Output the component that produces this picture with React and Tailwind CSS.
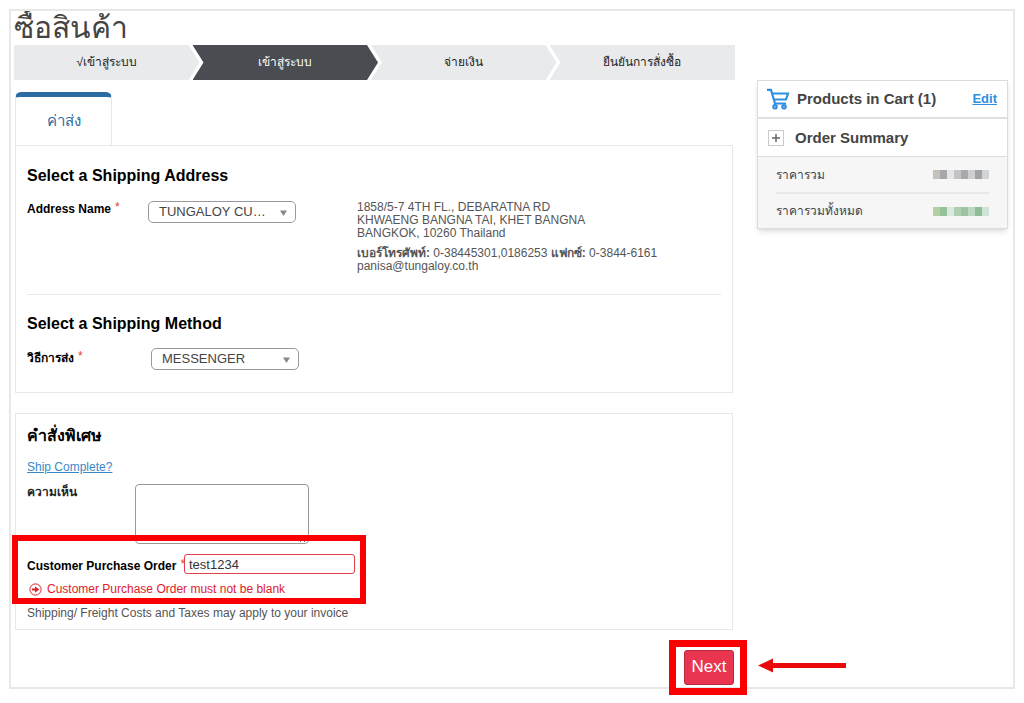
const steps = [
  { label: "√เข้าสู่ระบบ", shape: "bg-[#e9eaec] [clip-path:polygon(0_0,calc(100%-11px)_0,100%_50%,calc(100%-11px)_100%,0_100%)]" },
  { label: "เข้าสู่ระบบ", shape: "-ml-[7px] bg-[#4a4c51] text-white [clip-path:polygon(0_0,calc(100%-11px)_0,100%_50%,calc(100%-11px)_100%,0_100%,11px_50%)]" },
  { label: "จ่ายเงิน", shape: "-ml-[7px] bg-[#e9eaec] [clip-path:polygon(0_0,calc(100%-11px)_0,100%_50%,calc(100%-11px)_100%,0_100%,11px_50%)]" },
  { label: "ยืนยันการสั่งซื้อ", shape: "-ml-[7px] bg-[#e9eaec] [clip-path:polygon(0_0,100%_0,100%_100%,0_100%,11px_50%)]" },
];

const greyCells = ["#c4c2b8", "#a8a6ab", "#e4e5e6", "#c3c2c4", "#a9a8ac", "#cfcfd1", "#a3a2a6", "#d2d5d8"];
const greenCells = ["#b5cfa4", "#94c29b", "#dde9df", "#aecfb2", "#9cc4a0", "#bdd7c0", "#8fbd97", "#cfe3d6"];

// Hidden price, shown as a mosaic
function Mosaic({ cells }) {
  return (
    <svg width="56" height="9" viewBox="0 0 56 9" aria-hidden="true">
      {cells.map((c, i) => (
        <rect key={i} x={i * 7} width="7" height="9" fill={c} />
      ))}
    </svg>
  );
}

function Required() {
  return <span className="ml-1 self-start text-xs leading-3 font-normal text-[#e53935]">*</span>;
}

function Select({ id, children }) {
  return (
    <div className="relative w-[148px]">
      <select
        id={id}
        className="h-[22px] w-full appearance-none rounded-[5px] border border-[#999] bg-white pl-2.5 text-[13px] leading-5 text-[#444]"
      >
        <option>{children}</option>
      </select>
      <svg className="pointer-events-none absolute top-2 right-2" width="9" height="7" viewBox="0 0 9 7">
        <path d="M1 1.500h7L4.500 7z" fill="#888" />
      </svg>
    </div>
  );
}

export default function App() {
  return (
    <div className="bg-white p-[9px] font-['Liberation_Sans',sans-serif] text-xs text-[#444]">
      <div className="flex items-start border-2 border-[#e8e8e8] pr-[5px] pl-[3px]">
        <main className="min-w-0 flex-1">
          <h1 className="h-[34px] overflow-hidden text-[30px] leading-[34px] text-[#444]">ซื้อสินค้า</h1>

          <ol className="flex">
            {steps.map((s, i) => (
              <li key={i} className={`h-[35px] flex-1 text-center leading-[34px] text-[#222] ${s.shape}`}>
                {s.label}
              </li>
            ))}
          </ol>

          <div className="mt-3 flex pl-px">
            <button className="h-[53px] w-[97px] rounded-t-md border-x border-t-[5px] border-x-[#e8e8e8] border-t-[#2b6ca3] text-[15px] text-[#2b6ca3]">
              ค่าส่ง
            </button>
          </div>

          <section className="mr-0.5 ml-px h-[248px] border border-[#e8e8e8] px-[11px] pt-5">
            <h2 className="text-base leading-5 font-bold text-black">Select a Shipping Address</h2>
            <div className="mt-[15px] flex h-[94px] items-start border-b border-[#e8e8e8]">
              <label htmlFor="address" className="flex w-[121px] leading-4 font-bold text-black">
                Address Name <Required />
              </label>
              <Select id="address">TUNGALOY CU…</Select>
              <address className="ml-[61px] text-xs leading-[13px] whitespace-nowrap text-[#555] not-italic">
                1858/5-7 4TH FL., DEBARATNA RD
                <br />
                KHWAENG BANGNA TAI, KHET BANGNA
                <br />
                BANGKOK, 10260 Thailand
                <p className="mt-[7px]">
                  <b>เบอร์โทรศัพท์:</b> 0-38445301,0186253 <b>แฟกซ์:</b> 0-3844-6161
                  <br />
                  panisa@tungaloy.co.th
                </p>
              </address>
            </div>
            <h2 className="mt-[19px] text-base leading-5 font-bold text-black">Select a Shipping Method</h2>
            <div className="mt-3.5 flex items-start">
              <label htmlFor="method" className="flex w-[124px] pt-0.5 leading-4 font-bold text-black">
                วิธีการส่ง <Required />
              </label>
              <Select id="method">MESSENGER</Select>
            </div>
          </section>

          <section className="mt-5 mr-0.5 ml-px h-[217px] border border-[#e8e8e8] px-[11px] pt-3">
            <h2 className="text-base leading-5 font-bold text-black">คำสั่งพิเศษ</h2>
            <a href="#" className="mt-[13px] block leading-4 text-[#3a87c8] underline">Ship Complete?</a>
            <div className="mt-[9px] flex items-start">
              <label htmlFor="comment" className="w-[108px] leading-4 font-bold text-[#222]">ความเห็น</label>
              <textarea id="comment" className="h-[60px] w-[174px] rounded-sm border border-[#999]" />
            </div>
            <div className="relative mt-2.5">
              <div className="flex items-start">
                <label htmlFor="po" className="flex w-[157px] pt-1 leading-4 font-bold whitespace-nowrap text-black">
                  Customer Purchase Order <Required />
                </label>
                <input
                  id="po"
                  defaultValue="test1234"
                  className="h-5 w-[171px] rounded-[3px] border border-[#e0404a] px-1 text-[13px] text-[#333]"
                />
              </div>
              <p className="mt-[7px] flex items-center gap-[5px] pl-0.5 leading-4 text-[#e0202b]">
                <svg width="13" height="13" viewBox="0 0 13 13" fill="none" stroke="currentColor">
                  <circle cx="6.5" cy="6.5" r="5.6" />
                  <path d="M3 6.5h4" strokeWidth="2" />
                  <path d="M6 3.300l4.200 3.200-4.200 3.200z" fill="currentColor" stroke="none" />
                </svg>
                Customer Purchase Order must not be blank
              </p>
              <div className="pointer-events-none absolute -top-[19px] -left-[15px] h-[69px] w-[354px] border-[6px] border-[#fb0000]" />
            </div>
            <p className="mt-2 leading-4 text-[#555]">Shipping/ Freight Costs and Taxes may apply to your invoice</p>
          </section>

          <div className="mt-5 mr-px mb-0.5 flex justify-end">
            <div className="relative">
              <button className="h-[35px] w-[50px] rounded-[3px] border border-[#b52a3e] bg-[#e9354f] text-[17px] text-white">
                Next
              </button>
              <div className="pointer-events-none absolute -top-2.5 -right-[13px] -bottom-2.5 -left-[15px] border-[7px] border-[#fb0000]" />
              <svg className="absolute top-2 left-[74px]" width="88" height="15" viewBox="0 0 88 15" fill="#ea0808">
                <path d="M0 7.5L15 0.5V5H88V10H15V14.5z" />
              </svg>
            </div>
          </div>
        </main>

        <aside className="mt-[69px] ml-[22px] w-[251px] border border-[#dcdcdc] bg-white shadow-md">
          <div className="flex h-[38px] items-center border-b-2 border-[#e0e0e0] pr-2.5 pl-2">
            <svg width="24" height="22" viewBox="0 0 24 22" fill="none" stroke="#2f8fe0" strokeWidth="2.200">
              <path d="M1 1.800H5L9 15.500H20" />
              <path d="M6 5.500H22L20 11.500H8" />
              <circle cx="9" cy="18.800" r="1.700" />
              <circle cx="18" cy="18.800" r="1.700" />
            </svg>
            <h3 className="ml-[7px] text-[15px] font-bold whitespace-nowrap text-[#444]">Products in Cart (1)</h3>
            <a href="#" className="ml-auto text-[13px] font-bold text-[#2f8fe0] underline">Edit</a>
          </div>
          <div className="flex h-[38px] items-center border-b border-[#dcdcdc] pl-2.5">
            <button aria-label="Expand" className="flex size-4 items-center justify-center border border-[#ccc]">
              <svg width="8" height="8" viewBox="0 0 8 8" stroke="#666" strokeWidth="1.500">
                <path d="M4 0v8M0 4h8" />
              </svg>
            </button>
            <h3 className="ml-[11px] text-[15px] font-bold text-[#444]">Order Summary</h3>
          </div>
          <dl className="bg-[#f6f6f6] px-[18px]">
            <div className="flex h-[37px] items-center justify-between border-b-2 border-[#e8e8e8]">
              <dt className="font-medium">ราคารวม</dt>
              <dd><Mosaic cells={greyCells} /></dd>
            </div>
            <div className="flex h-[34px] items-center justify-between">
              <dt className="font-medium">ราคารวมทั้งหมด</dt>
              <dd><Mosaic cells={greenCells} /></dd>
            </div>
          </dl>
        </aside>
      </div>
    </div>
  );
}
